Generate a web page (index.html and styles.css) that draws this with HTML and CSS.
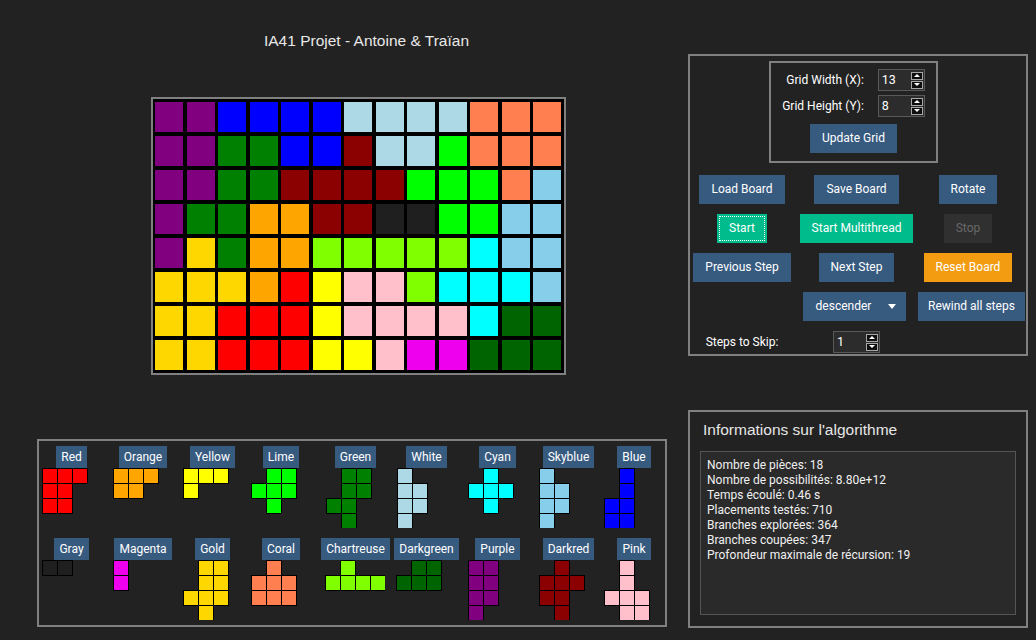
FILE: index.html
```html
<!DOCTYPE html>
<html lang="fr">
<head>
<meta charset="utf-8">
<title>IA41 Projet</title>
<link rel="stylesheet" href="styles.css">
</head>
<body>
<div class="app">
  <div class="left">
    <h1 class="title">IA41 Projet - Antoine &amp; Traïan</h1>

    <div class="board">
      <i class="pu"></i><i class="pu"></i><i class="bl"></i><i class="bl"></i><i class="bl"></i><i class="bl"></i><i class="lb"></i><i class="lb"></i><i class="lb"></i><i class="lb"></i><i class="co"></i><i class="co"></i><i class="co"></i>
      <i class="pu"></i><i class="pu"></i><i class="gr"></i><i class="gr"></i><i class="bl"></i><i class="bl"></i><i class="dr"></i><i class="lb"></i><i class="lb"></i><i class="li"></i><i class="co"></i><i class="co"></i><i class="co"></i>
      <i class="pu"></i><i class="pu"></i><i class="gr"></i><i class="gr"></i><i class="dr"></i><i class="dr"></i><i class="dr"></i><i class="dr"></i><i class="li"></i><i class="li"></i><i class="li"></i><i class="co"></i><i class="sk"></i>
      <i class="pu"></i><i class="gr"></i><i class="gr"></i><i class="or"></i><i class="or"></i><i class="dr"></i><i class="dr"></i><i class="gy"></i><i class="gy"></i><i class="li"></i><i class="li"></i><i class="sk"></i><i class="sk"></i>
      <i class="pu"></i><i class="go"></i><i class="gr"></i><i class="or"></i><i class="or"></i><i class="ch"></i><i class="ch"></i><i class="ch"></i><i class="ch"></i><i class="ch"></i><i class="cy"></i><i class="sk"></i><i class="sk"></i>
      <i class="go"></i><i class="go"></i><i class="go"></i><i class="or"></i><i class="re"></i><i class="ye"></i><i class="pk"></i><i class="pk"></i><i class="ch"></i><i class="cy"></i><i class="cy"></i><i class="cy"></i><i class="sk"></i>
      <i class="go"></i><i class="go"></i><i class="re"></i><i class="re"></i><i class="re"></i><i class="ye"></i><i class="pk"></i><i class="pk"></i><i class="pk"></i><i class="pk"></i><i class="cy"></i><i class="dg"></i><i class="dg"></i>
      <i class="go"></i><i class="go"></i><i class="re"></i><i class="re"></i><i class="re"></i><i class="ye"></i><i class="ye"></i><i class="pk"></i><i class="ma"></i><i class="ma"></i><i class="dg"></i><i class="dg"></i><i class="dg"></i>
    </div>

    <div class="pieces">
      <div class="piece"><span class="plabel">Red</span>
        <div class="shape k3 re"><i></i><i></i><i></i><i></i><i></i><i class="e"></i><i></i><i></i><i class="e"></i></div></div>
      <div class="piece"><span class="plabel">Orange</span>
        <div class="shape k3 or"><i></i><i></i><i></i><i></i><i></i><i class="e"></i></div></div>
      <div class="piece"><span class="plabel">Yellow</span>
        <div class="shape k3 ye"><i></i><i></i><i></i><i></i><i class="e"></i><i class="e"></i></div></div>
      <div class="piece"><span class="plabel">Lime</span>
        <div class="shape k3 li"><i class="e"></i><i></i><i></i><i></i><i></i><i></i><i class="e"></i><i></i><i class="e"></i></div></div>
      <div class="piece"><span class="plabel">Green</span>
        <div class="shape k3 gr"><i class="e"></i><i></i><i></i><i class="e"></i><i></i><i></i><i></i><i></i><i class="e"></i><i class="e"></i><i></i><i class="e"></i></div></div>
      <div class="piece"><span class="plabel">White</span>
        <div class="shape k2 lb"><i></i><i class="e"></i><i></i><i></i><i></i><i></i><i></i><i class="e"></i></div></div>
      <div class="piece"><span class="plabel">Cyan</span>
        <div class="shape k3 cy"><i class="e"></i><i></i><i class="e"></i><i></i><i></i><i></i><i class="e"></i><i></i><i class="e"></i></div></div>
      <div class="piece"><span class="plabel">Skyblue</span>
        <div class="shape k2 sk"><i></i><i class="e"></i><i></i><i></i><i></i><i></i><i></i><i class="e"></i></div></div>
      <div class="piece"><span class="plabel">Blue</span>
        <div class="shape k2 bl"><i class="e"></i><i></i><i class="e"></i><i></i><i></i><i></i><i></i><i></i></div></div>

      <div class="piece"><span class="plabel">Gray</span>
        <div class="shape k2 gy"><i></i><i></i></div></div>
      <div class="piece"><span class="plabel">Magenta</span>
        <div class="shape k1 ma"><i></i><i></i></div></div>
      <div class="piece"><span class="plabel">Gold</span>
        <div class="shape k3 go"><i class="e"></i><i></i><i></i><i class="e"></i><i></i><i></i><i></i><i></i><i></i><i class="e"></i><i></i><i class="e"></i></div></div>
      <div class="piece"><span class="plabel">Coral</span>
        <div class="shape k3 co"><i class="e"></i><i></i><i class="e"></i><i></i><i></i><i></i><i></i><i></i><i></i></div></div>
      <div class="piece"><span class="plabel">Chartreuse</span>
        <div class="shape k5 ch"><i class="e"></i><i></i><i class="e"></i><i class="e"></i><i class="e"></i><i></i><i></i><i></i><i></i><i></i></div></div>
      <div class="piece"><span class="plabel">Darkgreen</span>
        <div class="shape k3 dg"><i class="e"></i><i></i><i></i><i></i><i></i><i></i></div></div>
      <div class="piece"><span class="plabel">Purple</span>
        <div class="shape k2 pu"><i></i><i></i><i></i><i></i><i></i><i></i><i></i><i class="e"></i><i></i><i class="e"></i></div></div>
      <div class="piece"><span class="plabel">Darkred</span>
        <div class="shape k3 dr"><i class="e"></i><i></i><i class="e"></i><i></i><i></i><i></i><i></i><i></i><i class="e"></i><i class="e"></i><i></i><i class="e"></i></div></div>
      <div class="piece"><span class="plabel">Pink</span>
        <div class="shape k3 pk"><i class="e"></i><i></i><i class="e"></i><i class="e"></i><i></i><i class="e"></i><i></i><i></i><i></i><i class="e"></i><i></i><i></i></div></div>
    </div>
  </div>

  <div class="right">
    <div class="controls">
      <div class="gridbox">
        <span class="lbl">Grid Width (X):</span>
        <span class="spin"><span class="val">13</span><span class="arrows"><i class="up"></i><i class="dn"></i></span></span>
        <span class="lbl">Grid Height (Y):</span>
        <span class="spin"><span class="val">8</span><span class="arrows"><i class="up"></i><i class="dn"></i></span></span>
        <button class="btn update">Update Grid</button>
      </div>

      <div class="actions">
        <button class="btn">Load Board</button>
        <button class="btn">Save Board</button>
        <button class="btn">Rotate</button>

        <button class="btn success focus">Start</button>
        <button class="btn success">Start Multithread</button>
        <button class="btn disabled">Stop</button>

        <button class="btn">Previous Step</button>
        <button class="btn">Next Step</button>
        <button class="btn warning">Reset Board</button>

        <span class="blank"></span>
        <button class="btn select">descender<span class="caret"></span></button>
        <button class="btn rewind">Rewind all steps</button>

        <span class="lbl skip">Steps to Skip:</span>
        <span class="spin"><span class="val">1</span><span class="arrows"><i class="up"></i><i class="dn"></i></span></span>
      </div>
    </div>

    <div class="info">
      <h2 class="info-title">Informations sur l'algorithme</h2>
      <div class="infobox">
        <p>Nombre de pièces: 18</p>
        <p>Nombre de possibilités: 8.80e+12</p>
        <p>Temps écoulé: 0.46 s</p>
        <p>Placements testés: 710</p>
        <p>Branches explorées: 364</p>
        <p>Branches coupées: 347</p>
        <p>Profondeur maximale de récursion: 19</p>
      </div>
    </div>
  </div>
</div>
</body>
</html>
```

FILE: styles.css
```css
* { box-sizing: border-box; }

html, body {
  margin: 0;
  background: #222222;
  color: #ffffff;
  font-family: Roboto, "Noto Sans", sans-serif;
  font-size: 12px;
}

body {
  width: 1036px;
  height: 640px;
  overflow: hidden;
}

.app {
  display: flex;
  padding-left: 37px;
}

/* ---------- left column ---------- */
.left {
  width: 630px;
  padding-top: 32px;
}

.title {
  margin: 0;
  padding-left: 29px;
  font-family: "Liberation Sans", Arial, sans-serif;
  font-weight: normal;
  font-size: 15.5px;
  line-height: 17px;
  color: #e8e8e8;
  text-align: center;
}

.board {
  margin: 48px 0 0 114px;
  width: 415px;
  height: 278px;
  border: 2px solid #808080;
  background: #000;
  padding: 3px 3px 3px 2px;
  display: grid;
  grid-template-columns: repeat(13, 1fr);
  grid-template-rows: repeat(8, 1fr);
  gap: 4px 3.5px;
}

.board i { display: block; background: var(--c); }

/* colour palette */
.pu { --c: #800080; }
.bl { --c: #0000ff; }
.lb { --c: #add8e6; }
.co { --c: #ff7f50; }
.gr { --c: #008000; }
.dr { --c: #8b0000; }
.li { --c: #00ff00; }
.sk { --c: #87ceeb; }
.or { --c: #ffa500; }
.go { --c: #ffd700; }
.ch { --c: #7fff00; }
.cy { --c: #00ffff; }
.re { --c: #ff0000; }
.ye { --c: #ffff00; }
.pk { --c: #ffc0cb; }
.ma { --c: #ee00ee; }
.dg { --c: #006400; }
.gy { --c: #1f1f1f; }

/* ---------- pieces ---------- */
.pieces {
  margin-top: 64px;
  width: 630px;
  height: 188px;
  border: 2px solid #808080;
  padding-top: 5px;
  display: grid;
  grid-template-columns: 65px 78px 61px 76px 73px 69px 73px 69px 62px;
  row-gap: 10px;
  align-content: start;
  justify-items: center;
  align-items: start;
}

.piece {
  display: flex;
  flex-direction: column;
  align-items: center;
}

.plabel {
  display: block;
  height: 22px;
  line-height: 22px;
  padding: 0 5px;
  background: #375a7f;
  color: #fff;
  white-space: nowrap;
}

.shape {
  width: 60px;
  height: 60px;
  overflow: hidden;
  display: grid;
  grid-auto-rows: 15px;
  align-content: start;
}
.k1 { grid-template-columns: repeat(1, 15px); }
.k2 { grid-template-columns: repeat(2, 15px); }
.k3 { grid-template-columns: repeat(3, 15px); }
.k5 { grid-template-columns: repeat(5, 15px); }

.shape i {
  display: block;
  width: 16px;
  height: 16px;
  border: 1px solid #000;
  background: var(--c);
}
.shape i.e { visibility: hidden; }

/* ---------- right column ---------- */
.right {
  margin-left: 21px;
  width: 340px;
  padding-top: 54px;
}

.controls {
  height: 302px;
  border: 2px solid #808080;
}

.gridbox {
  margin: 5px 0 0 79px;
  width: 169px;
  height: 102px;
  border: 2px solid #808080;
  padding-top: 6px;
  display: grid;
  grid-template-columns: auto auto;
  justify-content: center;
  align-content: start;
  column-gap: 14px;
  row-gap: 4px;
}

.lbl {
  line-height: 22px;
  text-align: right;
  white-space: nowrap;
}

.update {
  grid-column: 1 / -1;
  justify-self: center;
  margin-top: 3px;
}

.spin {
  width: 47px;
  height: 22px;
  border: 1px solid #595959;
  background: #2c2c2c;
  display: flex;
  align-items: center;
  justify-content: space-between;
  padding: 0 1px 0 3px;
}
.spin .val { line-height: 20px; font-size: 12.5px; }

.arrows {
  display: flex;
  flex-direction: column;
  gap: 1px;
}
.arrows i {
  width: 12px;
  height: 8px;
  border: 1px solid #a8a8a8;
  background: #0e0e0e;
  display: flex;
  align-items: center;
  justify-content: center;
}
.arrows i::after {
  content: "";
  border-left: 3px solid transparent;
  border-right: 3px solid transparent;
}
.arrows .up::after { border-bottom: 3px solid #fff; }
.arrows .dn::after { border-top: 3px solid #fff; }

.actions {
  margin-top: 12px;
  display: grid;
  grid-template-columns: 104px 125px 98px;
  row-gap: 10px;
  justify-items: center;
  align-items: center;
}

.btn {
  height: 29px;
  padding: 0 12px;
  border: none;
  background: #375a7f;
  color: #fff;
  font-family: inherit;
  font-size: 12px;
  line-height: 29px;
  white-space: nowrap;
}
.btn.success { background: #00bc8c; }
.btn.warning { background: #f39c12; }
.btn.disabled { background: #303030; color: #686868; }
.btn.focus { outline: 1px dotted #fff; outline-offset: -3px; }

.btn.select {
  display: flex;
  align-items: center;
  gap: 17px;
  padding: 0 10px 0 13px;
  margin-left: -4px;
}
.caret {
  border-left: 4.5px solid transparent;
  border-right: 4.5px solid transparent;
  border-top: 5px solid #fff;
}

.btn.rewind {
  justify-self: start;
  padding: 0 10px;
  margin-left: -1px;
}

.skip { text-align: left; }

/* ---------- info ---------- */
.info {
  margin-top: 54px;
  height: 218px;
  border: 2px solid #808080;
  padding: 9px 10px 0;
}

.info-title {
  margin: 0 0 12px 3px;
  font-family: "Liberation Sans", Arial, sans-serif;
  font-weight: normal;
  font-size: 15.5px;
  line-height: 18px;
  color: #e6e6e6;
}

.infobox {
  height: 164px;
  border: 1px solid #555;
  background: #2a2a2a;
  padding: 6px 6px;
  line-height: 15px;
  color: #f0f0f0;
}
.infobox p { margin: 0; }
```
